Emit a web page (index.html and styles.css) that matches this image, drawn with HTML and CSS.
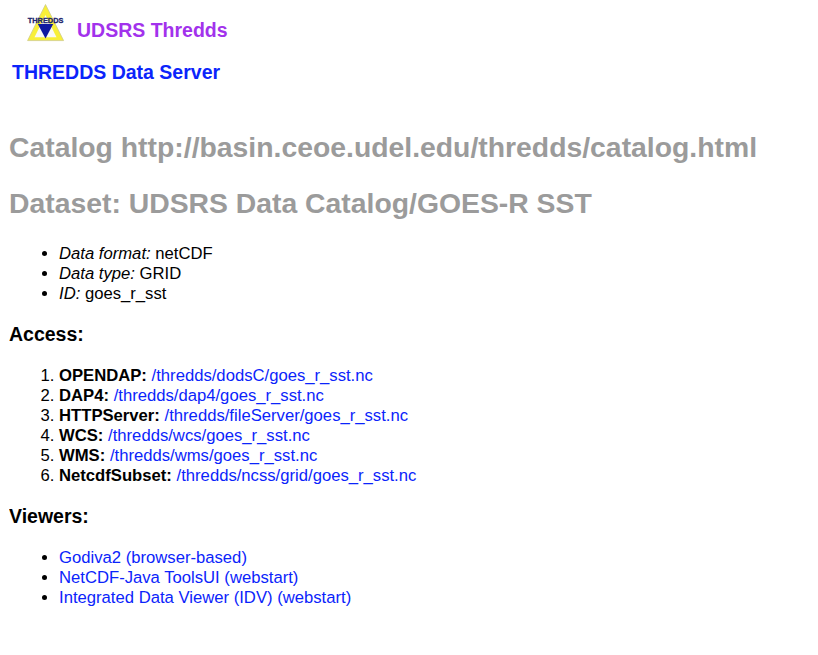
FILE: index.html
```
<!DOCTYPE html>
<html lang="en">
<head>
<meta charset="utf-8">
<title>UDSRS Data Catalog</title>
<link rel="stylesheet" href="styles.css">
</head>
<body>
<header class="brand">
<svg class="logo" viewBox="0 0 40 40" role="img" aria-label="THREDDS">
<path d="M20.5 1.5 38.6 37.6H2.6Z" fill="#f8ef38" stroke="#cfcb8a" stroke-width=".8" stroke-linejoin="round"/>
<path d="M20.5 12 31.5 34.2H9.5Z" fill="#fafaf6"/>
<path d="M12.8 21H28.2L20.5 35.5Z" fill="#1018a0"/>
<text x="2.8" y="20.2" class="logo-text" textLength="35.6" lengthAdjust="spacingAndGlyphs">THREDDS</text>
</svg>
<span class="site">UDSRS Thredds</span>
</header>
<div class="server">THREDDS Data Server</div>
<h1>Catalog http://basin.ceoe.udel.edu/thredds/catalog.html</h1>
<h1>Dataset: UDSRS Data Catalog/GOES-R SST</h1>
<ul>
<li><em>Data format: </em>netCDF</li>
<li><em>Data type: </em>GRID</li>
<li><em>ID: </em>goes_r_sst</li>
</ul>
<h3>Access:</h3>
<ol>
<li><b>OPENDAP:</b> <a href="#">/thredds/dodsC/goes_r_sst.nc</a></li>
<li><b>DAP4:</b> <a href="#">/thredds/dap4/goes_r_sst.nc</a></li>
<li><b>HTTPServer:</b> <a href="#">/thredds/fileServer/goes_r_sst.nc</a></li>
<li><b>WCS:</b> <a href="#">/thredds/wcs/goes_r_sst.nc</a></li>
<li><b>WMS:</b> <a href="#">/thredds/wms/goes_r_sst.nc</a></li>
<li><b>NetcdfSubset:</b> <a href="#">/thredds/ncss/grid/goes_r_sst.nc</a></li>
</ol>
<h3>Viewers:</h3>
<ul>
<li><a href="#">Godiva2 (browser-based)</a></li>
<li><a href="#">NetCDF-Java ToolsUI (webstart)</a></li>
<li><a href="#">Integrated Data Viewer (IDV) (webstart)</a></li>
</ul>
</body>
</html>
```
FILE: styles.css
```
body {
  margin: 0 9px;
  background: #fff;
  color: #000;
  font: 16.67px/20px "Liberation Sans", Arial, sans-serif;
}
.brand {
  display: flex;
  height: 46px;
  padding-left: 16px;
}
.logo { width: 40px; height: 40px; margin-top: 3px; }
.logo-text {
  font: bold 7.6px "Liberation Sans", Arial, sans-serif;
  fill: #20246c;
  stroke: #20246c;
  stroke-width: .3px;
}
.site {
  margin: 18px 0 0 12px;
  color: #a232ec;
  font-size: 19.5px;
  font-weight: bold;
  line-height: 24px;
}
.server {
  height: 24px;
  margin: 14px 0 45px 3px;
  color: #0b24fb;
  font-size: 19.5px;
  font-weight: bold;
  line-height: 24px;
}
h1 {
  margin: 0 0 20px;
  color: #9b9b9b;
  font-size: 28.35px;
  line-height: 36px;
}
h1 + ul { margin-top: 23px; }
ul, ol { margin: 0; padding-left: 50px; }
h3 { margin: 19px 0 21px; font-size: 19.5px; line-height: 22px; }
a { color: #0b24fb; text-decoration: none; }
```
